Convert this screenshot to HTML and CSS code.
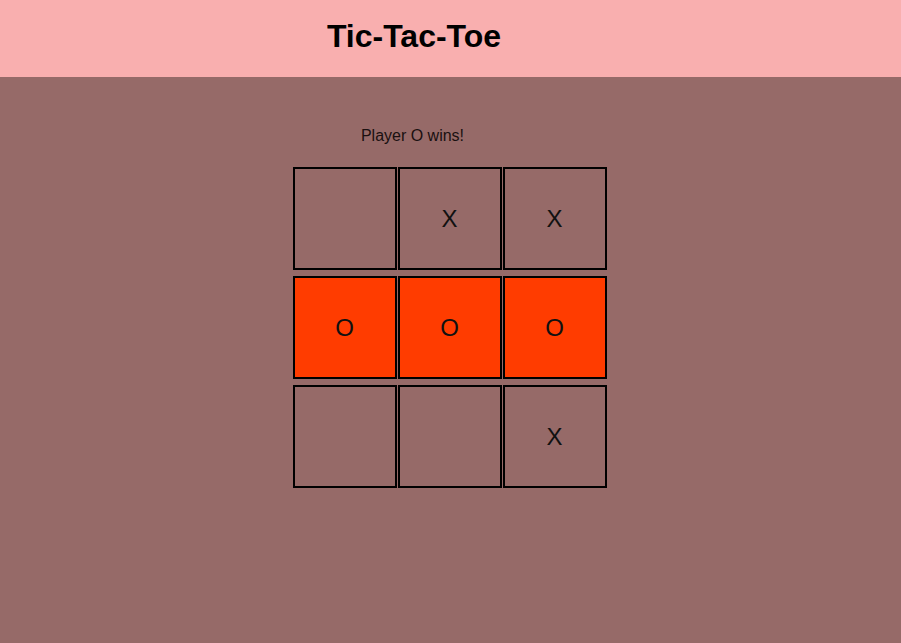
FILE: index.html
```html
<!DOCTYPE html>
<html>
<head>
<meta charset="utf-8">
<title>Tic-Tac-Toe</title>
<link rel="stylesheet" href="styles.css">
</head>
<body>
<header class="header"><h1 class="title">Tic-Tac-Toe</h1></header>
<main class="main">
  <div class="status">Player O wins!</div>
  <div class="board">
    <div class="cell"></div>
    <div class="cell">X</div>
    <div class="cell">X</div>
    <div class="cell win">O</div>
    <div class="cell win">O</div>
    <div class="cell win">O</div>
    <div class="cell"></div>
    <div class="cell"></div>
    <div class="cell">X</div>
  </div>
</main>
</body>
</html>
```
FILE: styles.css
```css
html, body {
  margin: 0;
  padding: 0;
  height: 100%;
}
body {
  background: #966a68;
  font-family: "Liberation Sans", Arial, sans-serif;
  color: #111;
}
.header {
  background: #f9afaf;
  height: 77px;
  padding-right: 73px;
  box-sizing: border-box;
  text-align: center;
}
.title {
  margin: 0;
  font-size: 32px;
  font-weight: bold;
  line-height: 72px;
  color: #000;
}
.main {
  display: flex;
  flex-direction: column;
  align-items: center;
}
.status {
  margin-top: 49px;
  font-size: 16px;
  line-height: 20px;
  color: #1a1010;
  margin-right: 76px;
}
.board {
  margin-top: 21px;
  margin-right: 2px;
  display: grid;
  grid-template-columns: repeat(3, 104px);
  grid-auto-rows: 103px;
  column-gap: 1px;
  row-gap: 6px;
}
.cell {
  box-sizing: border-box;
  border: 2px solid #000;
  display: flex;
  align-items: center;
  justify-content: center;
  font-size: 24px;
  color: #111;
}
.cell.win {
  background: #ff3c00;
}
```
